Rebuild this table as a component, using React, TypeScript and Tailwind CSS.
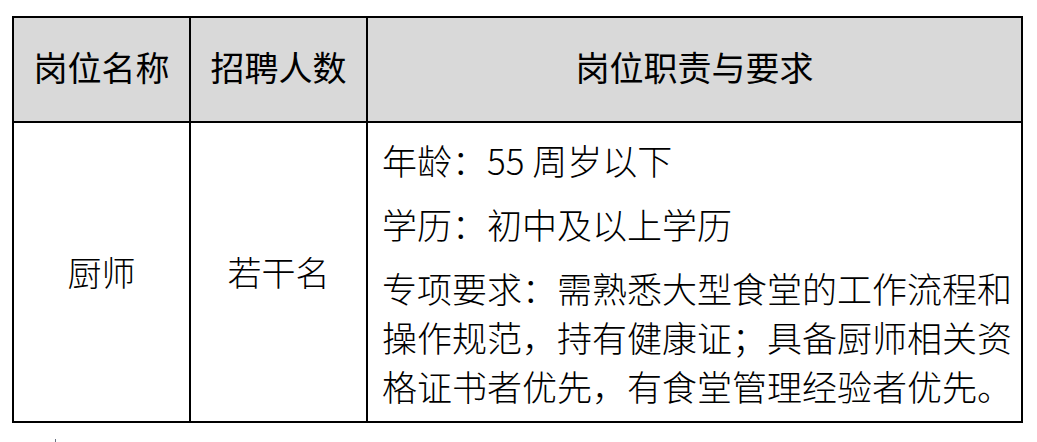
import React from "react";

const font = { fontFamily: '"Noto Sans CJK SC", "Noto Sans", sans-serif' };

export default function App() {
  return (
    <div className="w-[1037px] h-[442px] bg-white overflow-hidden text-black" style={font}>
      <div className="ml-[12px] mt-[16px] w-[1011px] border-2 border-black">
        <div className="flex h-[105px] border-b-2 border-black bg-[#d9d9d9] text-[34px] font-normal leading-none">
          <div className="w-[177px] border-r-2 border-black flex items-center justify-center pb-[6px]">岗位名称</div>
          <div className="w-[177px] border-r-2 border-black flex items-center justify-center pb-[6px]">招聘人数</div>
          <div className="flex-1 flex items-center justify-center pb-[6px]">岗位职责与要求</div>
        </div>
        <div className="flex h-[298px] text-[34px] font-light leading-none">
          <div className="w-[177px] border-r-2 border-black flex items-center justify-center">厨师</div>
          <div className="w-[177px] border-r-2 border-black flex items-center justify-center">若干名</div>
          <div className="flex-1 flex flex-col justify-center gap-[15px] pl-[14px] text-[35px] leading-[49px] whitespace-nowrap">
            <div>年龄：55 周岁以下</div>
            <div>学历：初中及以上学历</div>
            <div>
              专项要求：需熟悉大型食堂的工作流程和
              <br />
              操作规范，持有健康证；具备厨师相关资
              <br />
              格证书者优先，有食堂管理经验者优先。
            </div>
          </div>
        </div>
      </div>
      <div className="ml-[55px] mt-[16px] w-px h-[3px] bg-gray-500" />
    </div>
  );
}
